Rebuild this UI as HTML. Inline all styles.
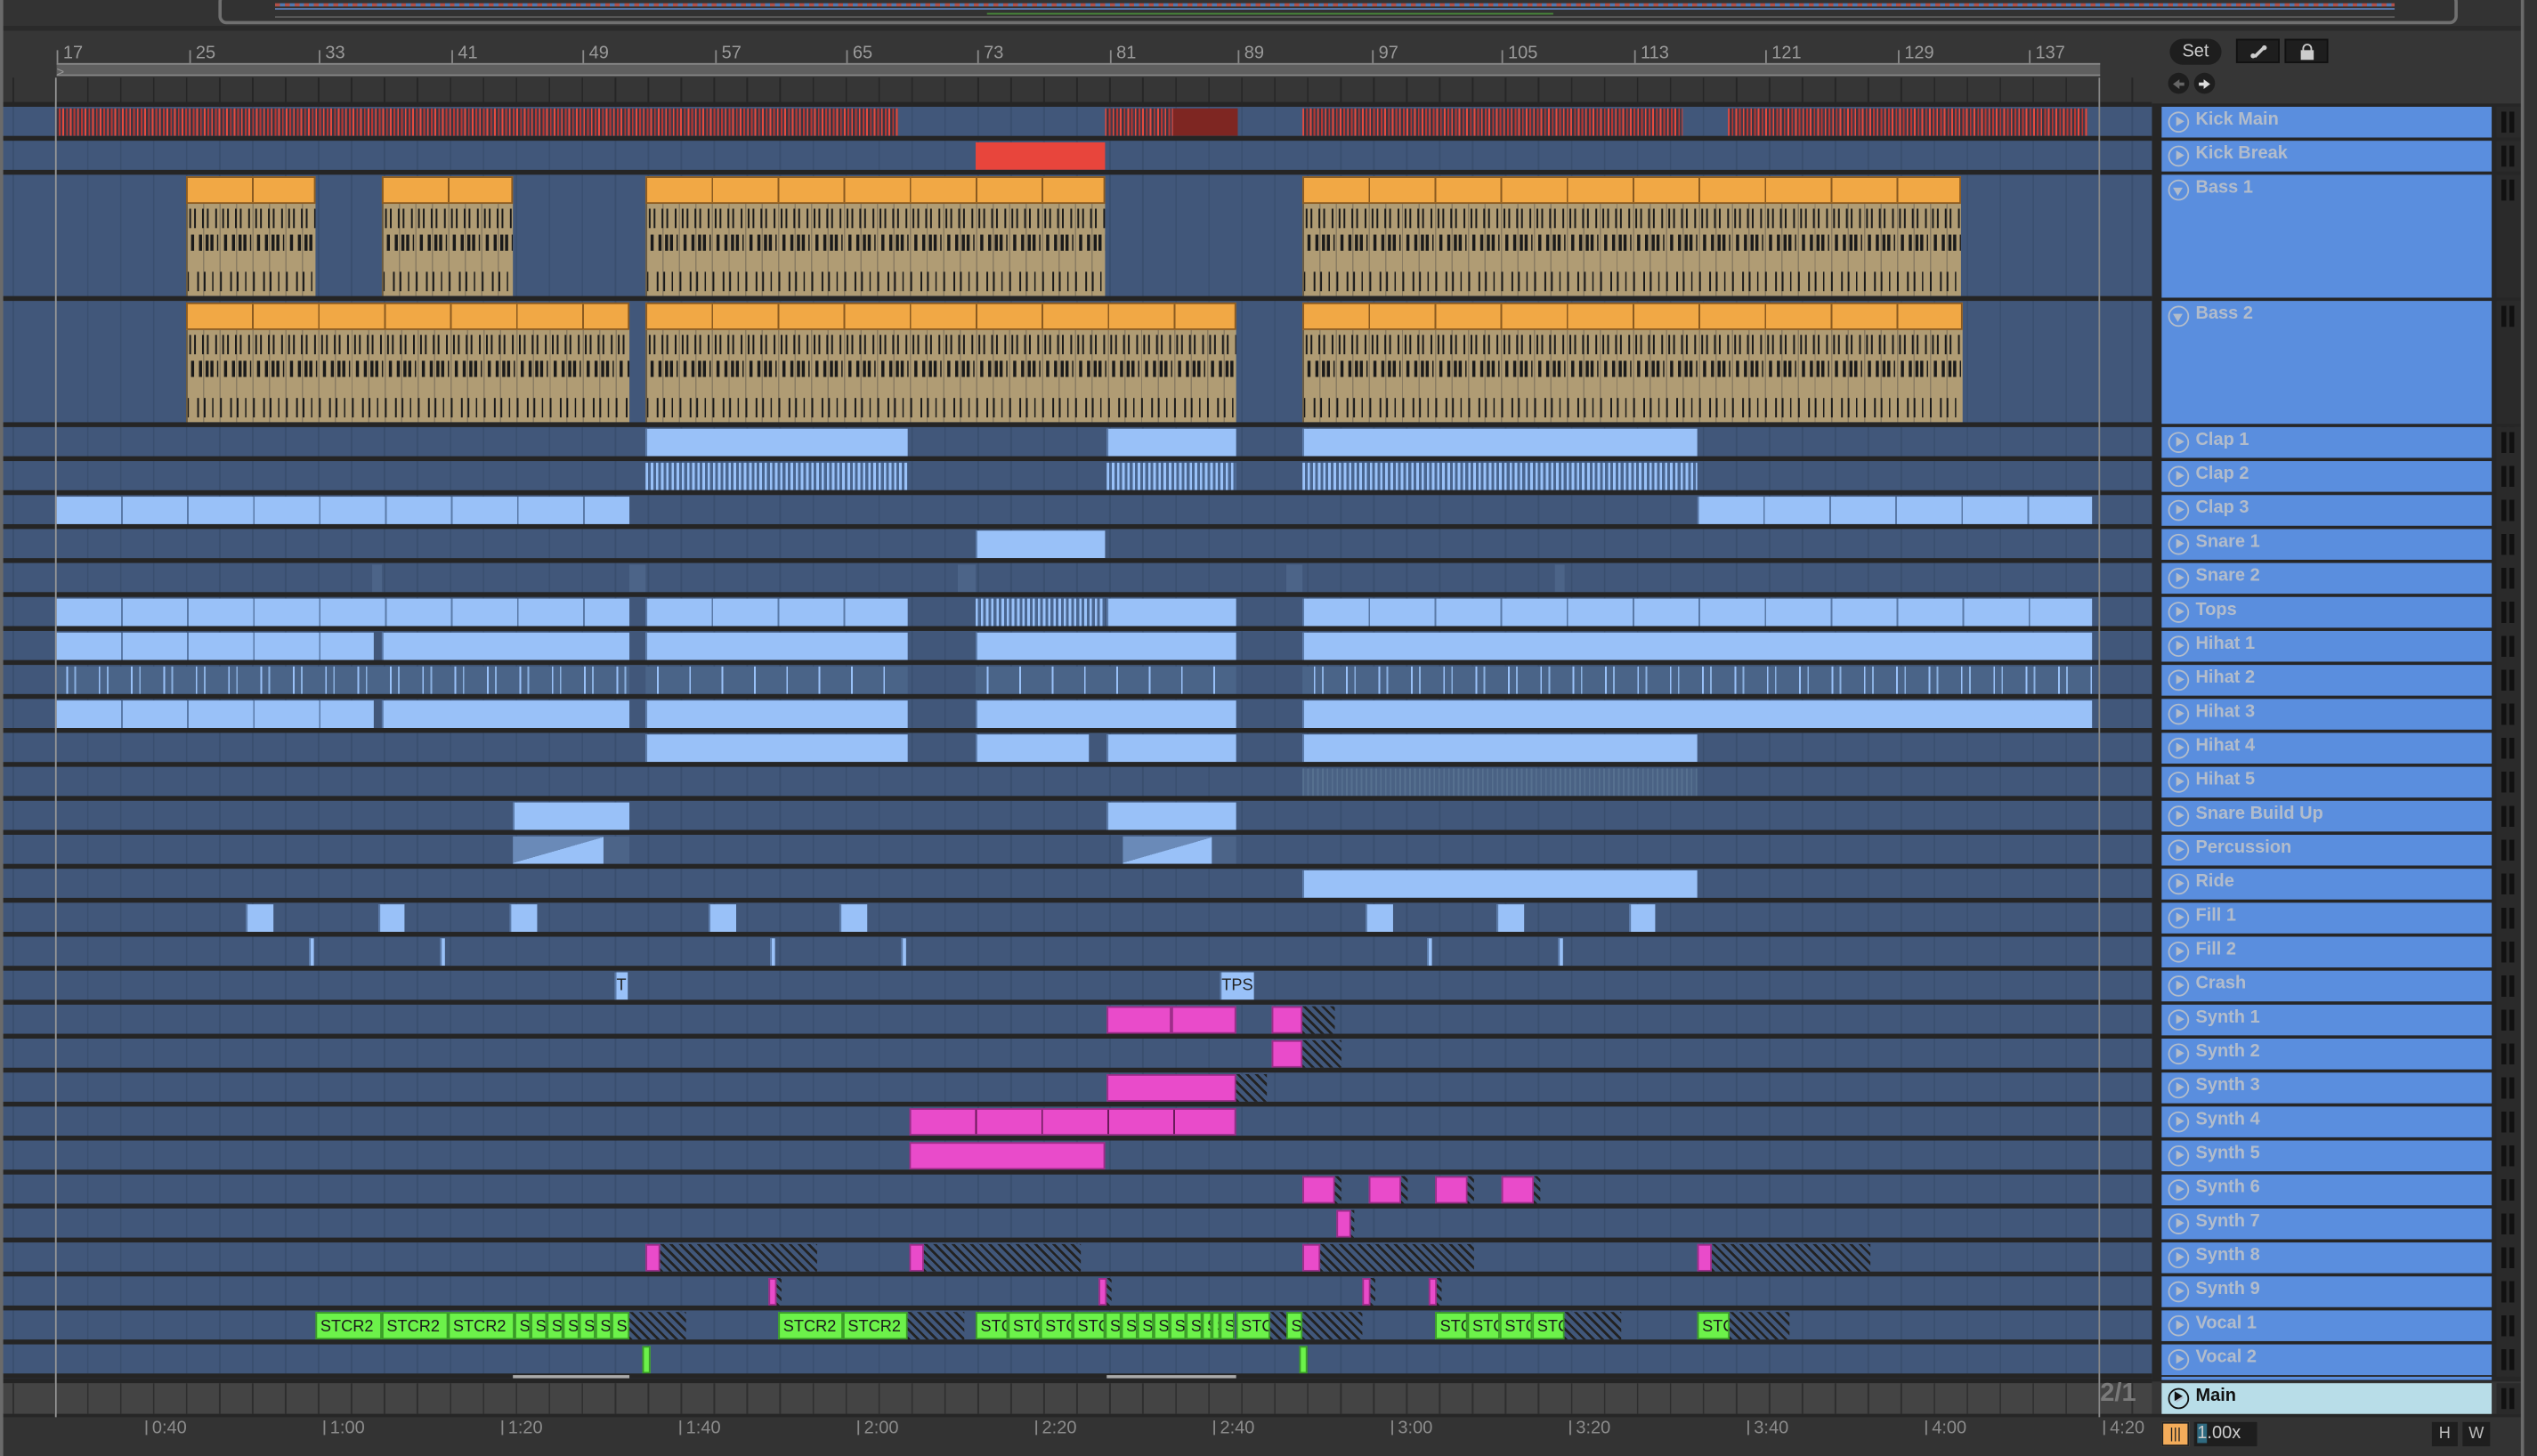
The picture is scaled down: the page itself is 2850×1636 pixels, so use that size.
<!DOCTYPE html>
<html><head><meta charset="utf-8"><style>
*{margin:0;padding:0;box-sizing:border-box}
html,body{width:2850px;height:1636px;overflow:hidden;background:#2b2b2b}
#s{position:absolute;left:0;top:0;width:1568px;height:900px;transform:scale(1.81760,1.81778);transform-origin:0 0;background:#363636;font-family:"Liberation Sans",sans-serif;overflow:hidden}
.a{position:absolute}
.r{position:absolute;left:0;width:1330px;background:#41577a repeating-linear-gradient(90deg,transparent 0 19.4px,#3a4f6f 19.4px 20.38px);background-position:14px 0;border-top:3px solid #252525}
.c{position:absolute;top:1px;bottom:1px}
.b{background:#99c1f8;border-left:1px solid #5a7aa8}
.st{background:repeating-linear-gradient(90deg,#99c1f8 0 1.5px,#4a6690 1.5px 3.2px)}
.p{background:#e94bca;border:1px solid #9b2d88}
.h{background:repeating-linear-gradient(45deg,#222 0 1.5px,#41577a 1.5px 4px)}
.g{background:#6cf24a;border:1px solid #3a9a28;font-size:10px;color:#1a1a1a;line-height:17px;overflow:hidden;white-space:nowrap;padding-left:2px}
.hd{position:absolute;left:1336px;width:204px;background:#5a8ede;color:#b2bccb;font-size:11px;font-weight:bold}
.hd i{position:absolute;left:4px;top:3px;width:13px;height:13px;border:1.3px solid #b2bccb;border-radius:50%}
.hd i:after{content:"";position:absolute;left:3.5px;top:2.3px;border-left:5px solid #b2bccb;border-top:3.2px solid transparent;border-bottom:3.2px solid transparent}
.hd i.d:after{left:1.7px;top:3.5px;border-top:5px solid #b2bccb;border-left:3.5px solid transparent;border-right:3.5px solid transparent;border-bottom:0}
.hd span{position:absolute;left:21px;top:2px}
.m{position:absolute;left:1543px;width:15px;background:#2a2a2a}
.m:after{content:"";position:absolute;left:3px;top:3px;width:9px;height:13px;background:repeating-linear-gradient(90deg,#111 0 3px,#2a2a2a 3px 5px)}
.rl{position:absolute;top:27px;font-size:11px;color:#9a9a9a}
.rl:before{content:"";position:absolute;left:-4px;top:4px;width:1px;height:9px;background:#888}
.tl{position:absolute;top:877px;font-size:11px;color:#8c8c8c}
.tl:before{content:"";position:absolute;left:-4px;top:1px;width:1px;height:9px;background:#888}
.or{position:absolute;top:1px;height:17px;background:#f1a845;border:1px solid #8a5a20;background-image:repeating-linear-gradient(90deg,transparent 0 39.8px,#8a5a20 39.8px 40.8px)}
.bd{position:absolute;top:18px;bottom:1px;border-left:1px solid #6a5a40;background-color:#b09c74;
background-image:
linear-gradient(90deg,#1a1a1a 0 1px,transparent 1px 3px,#1a1a1a 3px 4px,transparent 4px 8px,#1a1a1a 8px 9px,transparent 9px 11px,#1a1a1a 11px 12px,transparent 12px 16px,#1a1a1a 16px 17px,transparent 17px),
linear-gradient(90deg,transparent 0 1px,#1a1a1a 1px 3px,transparent 3px 6px,#1a1a1a 6px 8px,transparent 8px 10px,#1a1a1a 10px 12px,transparent 12px 13px,#1a1a1a 13px 15px,transparent 15px 17px,#1a1a1a 17px 18px,transparent 18px),
linear-gradient(90deg,transparent 0 5px,#1a1a1a 5px 6px,transparent 6px 9px,#1a1a1a 9px 10px,transparent 10px 14px,#1a1a1a 14px 15px,transparent 15px 19px,#1a1a1a 19px 20px,transparent 20px),
repeating-linear-gradient(90deg,transparent 0 9.4px,#8a7c62 9.4px 10.2px);
background-size:20.38px 12px,20.38px 10px,20.38px 12px,auto;
background-position:1px 3px,1px 19px,1px 42px,0 0;
background-repeat:repeat-x,repeat-x,repeat-x,repeat}
.kk{background:repeating-linear-gradient(90deg,#e54a3e 0 1px,#3d3540 1px 2.3px,#b93632 2.3px 3.3px,#4a3a48 3.3px 4.6px)}
</style></head><body><div id="s">
<div class="a" style="left:0;top:0;width:1568px;height:16px;background:#333"></div>
<div class="a" style="left:135px;top:-4px;width:1384px;height:19px;border:2px solid #707070;border-radius:5px;background:#323232"></div>
<div class="a" style="left:170px;top:2px;width:1310px;height:2px;background:repeating-linear-gradient(90deg,#b05048 0 3px,#5078b0 3px 6px)"></div>
<div class="a" style="left:170px;top:5px;width:1310px;height:1px;background:#5a7ab0"></div>
<div class="a" style="left:170px;top:10px;width:1310px;height:1px;background:#5c5c5c"></div>
<div class="a" style="left:610px;top:8px;width:350px;height:1px;background:#4a8a3a"></div>
<div class="a" style="left:0;top:16px;width:1568px;height:3px;background:#2a2a2a"></div>
<div class="rl" style="left:39px">17</div><div class="rl" style="left:121px">25</div><div class="rl" style="left:201px">33</div><div class="rl" style="left:283px">41</div><div class="rl" style="left:364px">49</div><div class="rl" style="left:446px">57</div><div class="rl" style="left:527px">65</div><div class="rl" style="left:608px">73</div><div class="rl" style="left:690px">81</div><div class="rl" style="left:769px">89</div><div class="rl" style="left:852px">97</div><div class="rl" style="left:932px">105</div><div class="rl" style="left:1014px">113</div><div class="rl" style="left:1095px">121</div><div class="rl" style="left:1177px">129</div><div class="rl" style="left:1258px">137</div>
<div class="a" style="left:35px;top:39px;width:1263px;height:8px;background:#5f5f5f;border-top:1px solid #888;border-bottom:1px solid #888"></div>
<div class="a" style="left:35px;top:40px;color:#999;font-size:8px">&gt;</div>
<div class="a" style="left:0;top:48px;width:1330px;height:16px;background:#363636 repeating-linear-gradient(90deg,transparent 0 19.4px,#262626 19.4px 20.38px);background-position:14px 0"></div>
<div class="a" style="left:1341px;top:24px;width:32px;height:16px;border-radius:8px;background:#1e1e1e;color:#ccc;font-size:11px;text-align:center;line-height:16px">Set</div>
<div class="a" style="left:1382px;top:24px;width:27px;height:15px;background:#1e1e1e;border:1px solid #111"><div class="a" style="left:9px;top:6px;width:9px;height:1.5px;background:#ccc;transform:rotate(-45deg)"></div><div class="a" style="left:8px;top:8px;width:3px;height:3px;border-radius:50%;background:#ccc"></div><div class="a" style="left:15px;top:3px;width:3px;height:3px;border-radius:50%;background:#ccc"></div></div>
<div class="a" style="left:1412px;top:24px;width:27px;height:15px;background:#1e1e1e;border:1px solid #111"><div class="a" style="left:9px;top:6px;width:8px;height:6px;background:#ccc"></div><div class="a" style="left:10px;top:2px;width:6px;height:6px;border:1.5px solid #ccc;border-radius:3px 3px 0 0"></div></div>
<div class="a" style="left:1340px;top:45px;width:13px;height:13px;border-radius:50%;background:#1e1e1e"><div class="a" style="left:3px;top:3.5px;border-right:4px solid #666;border-top:3px solid transparent;border-bottom:3px solid transparent"></div><div class="a" style="left:6px;top:5.5px;width:4px;height:2px;background:#666"></div></div>
<div class="a" style="left:1356px;top:45px;width:13px;height:13px;border-radius:50%;background:#1e1e1e"><div class="a" style="left:3px;top:5.5px;width:4px;height:2px;background:#ddd"></div><div class="a" style="left:6px;top:3.5px;border-left:4px solid #ddd;border-top:3px solid transparent;border-bottom:3px solid transparent"></div></div>
<div class="a" style="left:1330px;top:64px;width:238px;height:790px;background:#262626"></div>

<div class="r" style="top:63px;height:22px"><div class="c kk" style="left:34px;width:521px"></div><div class="c kk" style="left:683px;width:42px"></div><div class="c" style="left:725px;width:40px;background:#7e2622"></div><div class="c kk" style="left:805px;width:235px"></div><div class="c kk" style="left:1068px;width:222px"></div></div>
<div class="r" style="top:84px;height:22px"><div class="c" style="left:603px;width:80px;background:#e8453c"></div></div>
<div class="r" style="top:105px;height:79px">
<div class="or" style="left:115px;width:80px"></div><div class="bd" style="left:115px;width:80px"></div>
<div class="or" style="left:236px;width:81px"></div><div class="bd" style="left:236px;width:81px"></div>
<div class="or" style="left:399px;width:284px"></div><div class="bd" style="left:399px;width:284px"></div>
<div class="or" style="left:805px;width:407px"></div><div class="bd" style="left:805px;width:407px"></div>
</div>
<div class="r" style="top:183px;height:79px">
<div class="or" style="left:115px;width:274px"></div><div class="bd" style="left:115px;width:274px"></div>
<div class="or" style="left:399px;width:365px"></div><div class="bd" style="left:399px;width:365px"></div>
<div class="or" style="left:805px;width:408px"></div><div class="bd" style="left:805px;width:408px"></div>
</div>
<div class="r" style="top:261px;height:22px"><div class="c b" style="left:399px;width:162px"></div><div class="c b" style="left:684px;width:80px"></div><div class="c b" style="left:805px;width:244px"></div></div>
<div class="r" style="top:282px;height:22px"><div class="c st" style="left:399px;width:162px"></div><div class="c st" style="left:684px;width:80px"></div><div class="c st" style="left:805px;width:244px"></div></div>
<div class="r" style="top:303px;height:22px"><div class="c b" style="left:34px;width:355px;background:repeating-linear-gradient(90deg,#99c1f8 0 39.8px,#5a7aa8 39.8px 40.8px)"></div><div class="c b" style="left:1049px;width:244px;background:repeating-linear-gradient(90deg,#99c1f8 0 39.8px,#5a7aa8 39.8px 40.8px)"></div></div>
<div class="r" style="top:324px;height:22px"><div class="c b" style="left:603px;width:80px"></div></div>
<div class="r" style="top:345px;height:22px"><div class="c" style="left:230px;width:6px;background:#4c6488"></div><div class="c" style="left:389px;width:10px;background:#4c6488"></div><div class="c" style="left:592px;width:11px;background:#4c6488"></div><div class="c" style="left:795px;width:10px;background:#4c6488"></div><div class="c" style="left:961px;width:6px;background:#4c6488"></div></div>
<div class="r" style="top:366px;height:22px"><div class="c b" style="left:34px;width:355px;background:repeating-linear-gradient(90deg,#99c1f8 0 39.8px,#5a7aa8 39.8px 40.8px)"></div><div class="c b" style="left:399px;width:162px;background:repeating-linear-gradient(90deg,#99c1f8 0 39.8px,#5a7aa8 39.8px 40.8px)"></div><div class="c st" style="left:603px;width:80px"></div><div class="c b" style="left:684px;width:80px"></div><div class="c b" style="left:805px;width:488px;background:repeating-linear-gradient(90deg,#99c1f8 0 39.8px,#5a7aa8 39.8px 40.8px)"></div></div>
<div class="r" style="top:387px;height:22px"><div class="c b" style="left:34px;width:197px;background:repeating-linear-gradient(90deg,#99c1f8 0 39.8px,#5a7aa8 39.8px 40.8px)"></div><div class="c b" style="left:236px;width:153px"></div><div class="c b" style="left:399px;width:162px"></div><div class="c b" style="left:603px;width:161px"></div><div class="c b" style="left:805px;width:488px"></div></div>
<div class="r" style="top:408px;height:22px"><div class="c" style="left:34px;width:355px;background:repeating-linear-gradient(90deg,#4a6488 0 7px,#99c1f8 7px 8px,#4a6488 8px 12px,#8ab0e0 12px 13px,#4a6488 13px 20px)"></div><div class="c" style="left:399px;width:162px;background:repeating-linear-gradient(90deg,#4a6488 0 7px,#99c1f8 7px 8px,#4a6488 8px 20px)"></div><div class="c" style="left:603px;width:161px;background:repeating-linear-gradient(90deg,#4a6488 0 7px,#99c1f8 7px 8px,#4a6488 8px 20px)"></div><div class="c" style="left:805px;width:488px;background:repeating-linear-gradient(90deg,#4a6488 0 7px,#99c1f8 7px 8px,#4a6488 8px 12px,#8ab0e0 12px 13px,#4a6488 13px 20px)"></div></div>
<div class="r" style="top:429px;height:22px"><div class="c b" style="left:34px;width:197px;background:repeating-linear-gradient(90deg,#99c1f8 0 39.8px,#5a7aa8 39.8px 40.8px)"></div><div class="c b" style="left:236px;width:153px"></div><div class="c b" style="left:399px;width:162px"></div><div class="c b" style="left:603px;width:161px"></div><div class="c b" style="left:805px;width:488px"></div></div>
<div class="r" style="top:450px;height:22px"><div class="c b" style="left:399px;width:162px"></div><div class="c b" style="left:603px;width:70px"></div><div class="c b" style="left:684px;width:80px"></div><div class="c b" style="left:805px;width:244px"></div></div>
<div class="r" style="top:471px;height:22px"><div class="c" style="left:805px;width:244px;background:repeating-linear-gradient(90deg,#56708f 0 1px,#4a6284 1px 3px)"></div></div>
<div class="r" style="top:492px;height:22px"><div class="c b" style="left:317px;width:72px"></div><div class="c b" style="left:684px;width:80px"></div></div>
<div class="r" style="top:513px;height:22px"><div class="c" style="left:317px;width:56px;background:linear-gradient(164deg,#6a8ab8 50%,#99c1f8 50%)"></div><div class="c" style="left:694px;width:55px;background:linear-gradient(164deg,#6a8ab8 50%,#99c1f8 50%)"></div><div class="c" style="left:373px;width:16px;background:#4c6488"></div><div class="c" style="left:749px;width:15px;background:#4c6488"></div></div>
<div class="r" style="top:534px;height:22px"><div class="c b" style="left:805px;width:244px"></div></div>
<div class="r" style="top:555px;height:22px"><div class="c b" style="left:152px;width:17px"></div><div class="c b" style="left:234px;width:16px"></div><div class="c b" style="left:315px;width:17px"></div><div class="c b" style="left:438px;width:17px"></div><div class="c b" style="left:519px;width:17px"></div><div class="c b" style="left:844px;width:17px"></div><div class="c b" style="left:925px;width:17px"></div><div class="c b" style="left:1007px;width:16px"></div></div>
<div class="r" style="top:576px;height:22px"><div class="c b" style="left:191px;width:3px"></div><div class="c b" style="left:272px;width:3px"></div><div class="c b" style="left:476px;width:3px"></div><div class="c b" style="left:557px;width:3px"></div><div class="c b" style="left:882px;width:3px"></div><div class="c b" style="left:963px;width:3px"></div></div>
<div class="r" style="top:597px;height:22px"><div class="c b" style="left:380px;width:8px;font-size:10px;color:#222;line-height:17px;overflow:hidden">T</div><div class="c b" style="left:754px;width:21px;font-size:10px;color:#222;line-height:17px;overflow:hidden">TPS</div></div>
<div class="r" style="top:618px;height:22px"><div class="c p" style="left:684px;width:40px"></div><div class="c p" style="left:724px;width:40px"></div><div class="c p" style="left:786px;width:19px"></div><div class="c h" style="left:805px;width:20px"></div></div>
<div class="r" style="top:639px;height:22px"><div class="c p" style="left:786px;width:19px"></div><div class="c h" style="left:805px;width:24px"></div></div>
<div class="r" style="top:660px;height:22px"><div class="c p" style="left:684px;width:80px"></div><div class="c h" style="left:764px;width:19px"></div></div>
<div class="r" style="top:681px;height:22px"><div class="c p" style="left:562px;width:202px;background:repeating-linear-gradient(90deg,#e94bca 0 39.8px,#6a1a5a 39.8px 40.8px)"></div></div>
<div class="r" style="top:702px;height:22px"><div class="c p" style="left:562px;width:121px"></div></div>
<div class="r" style="top:723px;height:22px"><div class="c p" style="left:805px;width:20px"></div><div class="c h" style="left:825px;width:4px"></div><div class="c p" style="left:846px;width:20px"></div><div class="c h" style="left:866px;width:4px"></div><div class="c p" style="left:887px;width:20px"></div><div class="c h" style="left:907px;width:4px"></div><div class="c p" style="left:928px;width:20px"></div><div class="c h" style="left:948px;width:4px"></div></div>
<div class="r" style="top:744px;height:22px"><div class="c p" style="left:826px;width:9px"></div><div class="c h" style="left:835px;width:2px"></div></div>
<div class="r" style="top:765px;height:22px"><div class="c p" style="left:399px;width:9px"></div><div class="c h" style="left:408px;width:97px"></div><div class="c p" style="left:562px;width:9px"></div><div class="c h" style="left:571px;width:97px"></div><div class="c p" style="left:805px;width:11px"></div><div class="c h" style="left:816px;width:95px"></div><div class="c p" style="left:1049px;width:9px"></div><div class="c h" style="left:1058px;width:98px"></div></div>
<div class="r" style="top:786px;height:22px"><div class="c p" style="left:475px;width:5px"></div><div class="c h" style="left:480px;width:3px"></div><div class="c p" style="left:679px;width:5px"></div><div class="c h" style="left:684px;width:3px"></div><div class="c p" style="left:842px;width:5px"></div><div class="c h" style="left:847px;width:3px"></div><div class="c p" style="left:883px;width:5px"></div><div class="c h" style="left:888px;width:3px"></div></div>
<div class="r" style="top:807px;height:22px">
<div class="c g" style="left:195px;width:41px">STCR2</div><div class="c g" style="left:236px;width:41px">STCR2</div><div class="c g" style="left:277px;width:41px">STCR2</div><div class="c g" style="left:318px;width:10px">S</div><div class="c g" style="left:328px;width:10px">S</div><div class="c g" style="left:338px;width:10px">S</div><div class="c g" style="left:348px;width:10px">S</div><div class="c g" style="left:358px;width:10px">S</div><div class="c g" style="left:368px;width:10px">S</div><div class="c g" style="left:378px;width:11px">S</div><div class="c h" style="left:389px;width:35px"></div>
<div class="c g" style="left:481px;width:40px">STCR2</div><div class="c g" style="left:521px;width:40px">STCR2</div><div class="c h" style="left:561px;width:35px"></div>
<div class="c g" style="left:603px;width:20px">STC</div><div class="c g" style="left:623px;width:20px">STC</div><div class="c g" style="left:643px;width:20px">STC</div><div class="c g" style="left:663px;width:20px">STC</div><div class="c g" style="left:683px;width:10px">S</div><div class="c g" style="left:693px;width:10px">S</div><div class="c g" style="left:703px;width:10px">S</div><div class="c g" style="left:713px;width:10px">S</div><div class="c g" style="left:723px;width:10px">S</div><div class="c g" style="left:733px;width:10px">S</div><div class="c g" style="left:743px;width:6px">S</div><div class="c g" style="left:749px;width:5px">S</div><div class="c g" style="left:754px;width:9px">S</div><div class="c g" style="left:764px;width:21px">STC</div><div class="c h" style="left:785px;width:10px"></div>
<div class="c g" style="left:795px;width:10px">S</div><div class="c h" style="left:805px;width:37px"></div>
<div class="c g" style="left:887px;width:20px">STC</div><div class="c g" style="left:907px;width:20px">STC</div><div class="c g" style="left:927px;width:20px">STC</div><div class="c g" style="left:947px;width:20px">STC</div><div class="c h" style="left:967px;width:35px"></div>
<div class="c g" style="left:1049px;width:20px">STC</div><div class="c h" style="left:1069px;width:37px"></div>
</div>
<div class="r" style="top:828px;height:22px"><div class="c g" style="left:397px;width:5px"></div><div class="c g" style="left:803px;width:5px"></div></div>
<div class="r" style="top:849px;height:4px;background:#41577a"></div>
<div class="a" style="left:317px;top:850px;width:72px;height:2px;background:#aaa"></div><div class="a" style="left:684px;top:850px;width:80px;height:2px;background:#aaa"></div>
<div class="a" style="left:0;top:852px;width:1330px;height:3px;background:#252525"></div>
<div class="a" style="left:0;top:855px;width:1330px;height:19px;background:#444 repeating-linear-gradient(90deg,transparent 0 19.4px,#2e2e2e 19.4px 20.38px);background-position:14px 0"></div>
<div class="a" style="left:1298px;top:853px;color:#7a7a7a;font-size:16px;font-weight:bold">2/1</div>
<div class="a" style="left:0;top:874px;width:1568px;height:26px;background:#333;border-top:2px solid #262626"></div>
<div class="tl" style="left:94px">0:40</div><div class="tl" style="left:204px">1:00</div><div class="tl" style="left:314px">1:20</div><div class="tl" style="left:424px">1:40</div><div class="tl" style="left:534px">2:00</div><div class="tl" style="left:644px">2:20</div><div class="tl" style="left:754px">2:40</div><div class="tl" style="left:864px">3:00</div><div class="tl" style="left:974px">3:20</div><div class="tl" style="left:1084px">3:40</div><div class="tl" style="left:1194px">4:00</div><div class="tl" style="left:1304px">4:20</div>
<div class="a" style="left:34px;top:48px;width:1px;height:828px;background:#999"></div>
<div class="a" style="left:1297px;top:48px;width:1px;height:828px;background:#888"></div>
<div class="hd" style="top:66px;height:19px"><i></i><span>Kick Main</span></div>
<div class="hd" style="top:87px;height:19px"><i></i><span>Kick Break</span></div>
<div class="hd" style="top:108px;height:76px"><i class="d"></i><span>Bass 1</span></div>
<div class="hd" style="top:186px;height:76px"><i class="d"></i><span>Bass 2</span></div>
<div class="hd" style="top:264px;height:19px"><i></i><span>Clap 1</span></div>
<div class="hd" style="top:285px;height:19px"><i></i><span>Clap 2</span></div>
<div class="hd" style="top:306px;height:19px"><i></i><span>Clap 3</span></div>
<div class="hd" style="top:327px;height:19px"><i></i><span>Snare 1</span></div>
<div class="hd" style="top:348px;height:19px"><i></i><span>Snare 2</span></div>
<div class="hd" style="top:369px;height:19px"><i></i><span>Tops</span></div>
<div class="hd" style="top:390px;height:19px"><i></i><span>Hihat 1</span></div>
<div class="hd" style="top:411px;height:19px"><i></i><span>Hihat 2</span></div>
<div class="hd" style="top:432px;height:19px"><i></i><span>Hihat 3</span></div>
<div class="hd" style="top:453px;height:19px"><i></i><span>Hihat 4</span></div>
<div class="hd" style="top:474px;height:19px"><i></i><span>Hihat 5</span></div>
<div class="hd" style="top:495px;height:19px"><i></i><span>Snare Build Up</span></div>
<div class="hd" style="top:516px;height:19px"><i></i><span>Percussion</span></div>
<div class="hd" style="top:537px;height:19px"><i></i><span>Ride</span></div>
<div class="hd" style="top:558px;height:19px"><i></i><span>Fill 1</span></div>
<div class="hd" style="top:579px;height:19px"><i></i><span>Fill 2</span></div>
<div class="hd" style="top:600px;height:19px"><i></i><span>Crash</span></div>
<div class="hd" style="top:621px;height:19px"><i></i><span>Synth 1</span></div>
<div class="hd" style="top:642px;height:19px"><i></i><span>Synth 2</span></div>
<div class="hd" style="top:663px;height:19px"><i></i><span>Synth 3</span></div>
<div class="hd" style="top:684px;height:19px"><i></i><span>Synth 4</span></div>
<div class="hd" style="top:705px;height:19px"><i></i><span>Synth 5</span></div>
<div class="hd" style="top:726px;height:19px"><i></i><span>Synth 6</span></div>
<div class="hd" style="top:747px;height:19px"><i></i><span>Synth 7</span></div>
<div class="hd" style="top:768px;height:19px"><i></i><span>Synth 8</span></div>
<div class="hd" style="top:789px;height:19px"><i></i><span>Synth 9</span></div>
<div class="hd" style="top:810px;height:19px"><i></i><span>Vocal 1</span></div>
<div class="hd" style="top:831px;height:19px"><i></i><span>Vocal 2</span></div>
<div class="hd" style="top:851px;height:2px"></div>
<div class="hd" style="top:855px;height:19px;background:#b8dde8;color:#111"><i style="border-color:#111"></i><span style="color:#111">Main</span></div>
<div class="a" style="left:1344px;top:860px;border-left:5px solid #111;border-top:3.2px solid transparent;border-bottom:3.2px solid transparent"></div>
<div class="m" style="top:66px;height:19px"></div><div class="m" style="top:87px;height:19px"></div><div class="m" style="top:108px;height:76px"></div><div class="m" style="top:186px;height:76px"></div>
<div class="a" style="left:1543px;top:264px;width:15px;height:587px;background:repeating-linear-gradient(#2a2a2a 0 3px,transparent 3px 16px,#2a2a2a 16px 21px),repeating-linear-gradient(90deg,#2a2a2a 0 3px,#111 3px 6px,#2a2a2a 6px 8px,#111 8px 11px,#2a2a2a 11px 15px)"></div>
<div class="m" style="top:855px;height:19px"></div>
<div class="a" style="left:1336px;top:879px;width:17px;height:15px;background:#f4ac5a;border:1px solid #222;color:#222;font-size:9px;text-align:center;line-height:13px">|||</div>
<div class="a" style="left:1356px;top:879px;width:39px;height:15px;background:#1e1e1e;color:#ccc;font-size:11px;line-height:15px;padding-left:2px"><span style="background:#2f6a80">1</span>.00x</div>
<div class="a" style="left:1503px;top:879px;width:16px;height:15px;background:#1e1e1e;color:#bbb;font-size:10px;text-align:center;line-height:15px">H</div>
<div class="a" style="left:1522px;top:879px;width:17px;height:15px;background:#1e1e1e;color:#bbb;font-size:10px;text-align:center;line-height:15px">W</div>
<div class="a" style="left:1558px;top:0;width:10px;height:900px;background:#333;border-left:2px solid #6a6a6a"></div>
<div class="a" style="left:0;top:0;width:2px;height:900px;background:#6a6a6a"></div>
</div></body></html>
